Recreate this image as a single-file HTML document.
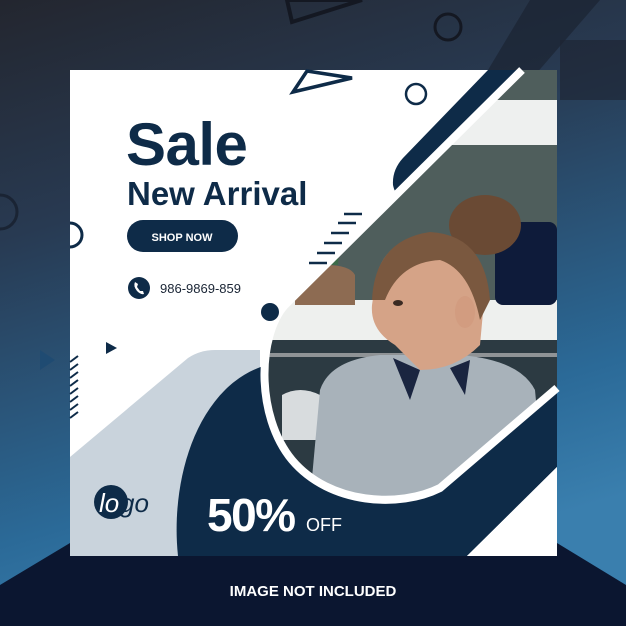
<!DOCTYPE html>
<html><head><meta charset="utf-8"><style>
html,body{margin:0;padding:0;width:626px;height:626px;overflow:hidden;background:#262b38}
svg{display:block}
text{font-family:"Liberation Sans",sans-serif}
</style></head><body>
<svg width="626" height="626" viewBox="0 0 626 626" xmlns="http://www.w3.org/2000/svg">
<defs>
<linearGradient id="bg" x1="0" y1="0" x2="0.3" y2="1">
<stop offset="0" stop-color="#23262f"/><stop offset="0.35" stop-color="#283a52"/><stop offset="0.8" stop-color="#2b6a98"/><stop offset="1" stop-color="#3a7fae"/>
</linearGradient>
<clipPath id="ph"><path d="M522 70 L557 70 L557 388 L440 488 C400 508 330 505 292 460 C255 415 258 335 285 305 Z"/></clipPath>
</defs>
<rect width="626" height="626" fill="url(#bg)"/>
<path d="M287 0 L362 0 L292 22 Z" fill="none" stroke="#141822" stroke-width="4"/>
<circle cx="448" cy="27" r="13" fill="none" stroke="#141822" stroke-width="3"/>
<path d="M530 0 L600 0 L470 150 L440 150 Z" fill="#1b2332" opacity="0.7"/>
<path d="M560 40 L626 40 L626 100 L560 100 Z" fill="#1d2330" opacity="0.6"/>
<circle cx="0" cy="212" r="17" fill="none" stroke="#1a2434" stroke-width="3"/>
<path d="M40 350 L55 360 L40 370 Z" fill="#1f4b72"/>
<path d="M0 585 L70 543 L557 543 L626 585 L626 626 L0 626 Z" fill="#0b1630"/>
<rect x="70" y="70" width="487" height="486" fill="#fff"/>
<path d="M70 457 L188 358 Q200 350 215 350 L260 350 L260 556 L70 556 Z" fill="#c9d3dc"/>
<path d="M178 556 C172 500 185 430 225 390 C250 365 280 360 300 360 L557 360 L557 467 L467 556 Z" fill="#0e2b48"/>
<path d="M488 70 L520 70 L406 190 Q396 200 393 185 Q392 170 403 158 Z" fill="#0e2b48"/>
<g clip-path="url(#ph)">
<rect x="250" y="70" width="310" height="440" fill="#4f5e5c"/>
<rect x="440" y="100" width="120" height="45" fill="#eef0ef"/>
<rect x="250" y="300" width="310" height="40" fill="#eef0ee"/>
<rect x="250" y="340" width="310" height="170" fill="#2c3a42"/>
<rect x="262" y="353" width="300" height="4" fill="#8f9396"/>
<path d="M295 275 Q300 265 325 265 Q350 265 355 275 L355 305 L295 305 Z" fill="#8d6b52"/>
<path d="M305 265 L315 230 L325 258 L340 235 L338 265 Z" fill="#3d6b4a"/>
<rect x="495" y="222" width="62" height="83" rx="8" fill="#0e1b3a"/>
<path d="M282 395 Q300 385 320 395 L322 440 L282 440 Z" fill="#d8dcde"/>
<path d="M320 390 Q330 360 380 355 L460 355 Q520 360 535 390 L545 500 L310 500 Z" fill="#a8b2ba"/>
<path d="M393 358 L410 400 L420 370 Z M450 368 L465 395 L470 360 Z" fill="#1a2540"/>
<ellipse cx="485" cy="225" rx="36" ry="30" fill="#6a4a34"/>
<path d="M375 285 Q380 240 430 235 Q480 238 485 290 L480 345 Q455 370 420 370 L395 345 Q370 330 372 305 Z" fill="#d5a387"/>
<path d="M372 300 Q375 240 430 232 Q485 235 490 300 L480 320 Q470 270 440 260 Q400 262 385 300 Z" fill="#7a583f"/>
<ellipse cx="465" cy="312" rx="10" ry="16" fill="#d29c80"/>
<ellipse cx="398" cy="303" rx="5" ry="3" fill="#3a2a22"/>
</g>
<path d="M522 70 L285 305 C258 335 255 415 292 460 C330 505 400 508 440 488 L557 388" fill="none" stroke="#fff" stroke-width="8"/>
<circle cx="270" cy="312" r="9" fill="#0e2b48"/>
<path d="M467 556 L557 467 L557 556 Z" fill="#fff"/>
<g stroke="#0e2b48" stroke-width="2.5">
<line x1="344" y1="214" x2="362" y2="214"/><line x1="338" y1="223" x2="356" y2="223"/>
<line x1="331" y1="233" x2="349" y2="233"/><line x1="324" y1="243" x2="342" y2="243"/>
<line x1="317" y1="253" x2="335" y2="253"/><line x1="309" y1="263" x2="327" y2="263"/>
</g>
<path d="M307 71 L352 78 L293 92 Z" fill="none" stroke="#0e2b48" stroke-width="3.5"/>
<circle cx="416" cy="94" r="10" fill="#fff" stroke="#0e2b48" stroke-width="2.5"/>
<path d="M70 223 A12 12 0 0 1 70 247" fill="#fff" stroke="#0e2b48" stroke-width="3"/>
<path d="M106 342 L117 348 L106 354 Z" fill="#0e2b48"/>
<g stroke="#0e2b48" stroke-width="2">
<line x1="70" y1="362" x2="78" y2="356"/><line x1="70" y1="370" x2="78" y2="364"/><line x1="70" y1="378" x2="78" y2="372"/>
<line x1="70" y1="386" x2="78" y2="380"/><line x1="70" y1="394" x2="78" y2="388"/><line x1="70" y1="402" x2="78" y2="396"/>
<line x1="70" y1="410" x2="78" y2="404"/><line x1="70" y1="418" x2="78" y2="412"/>
</g>
<text x="126" y="165" font-size="60" font-weight="bold" fill="#0e2b48" letter-spacing="-0.5">Sale</text>
<text x="127" y="205" font-size="33" font-weight="bold" fill="#0e2b48" letter-spacing="0">New Arrival</text>
<rect x="127" y="220" width="111" height="32" rx="16" fill="#0e2b48"/>
<text x="182" y="241" font-size="11" font-weight="bold" fill="#fff" text-anchor="middle">SHOP NOW</text>
<circle cx="139" cy="288" r="11" fill="#0e2b48"/>
<path d="M135 282 Q133 286 137 291 Q141 295 144 294 L143 291 L140 291 L137 287 L138 284 Z" fill="#fff"/>
<text x="160" y="293" font-size="13" fill="#1a2535">986-9869-859</text>
<circle cx="111" cy="502" r="17" fill="#0e2b48"/>
<text x="99" y="512" font-size="26" font-style="italic" fill="#fff" font-family="Liberation Serif,serif">lo</text>
<text x="120" y="512" font-size="26" font-style="italic" fill="#0e2b48" font-family="Liberation Serif,serif">go</text>
<text x="207" y="531" font-size="46" font-weight="bold" fill="#fff" letter-spacing="-1.5">50%</text>
<text x="306" y="531" font-size="18" fill="#fff">OFF</text>
<text x="313" y="596" font-size="15" font-weight="bold" fill="#fff" text-anchor="middle">IMAGE NOT INCLUDED</text>
</svg>
</body></html>
